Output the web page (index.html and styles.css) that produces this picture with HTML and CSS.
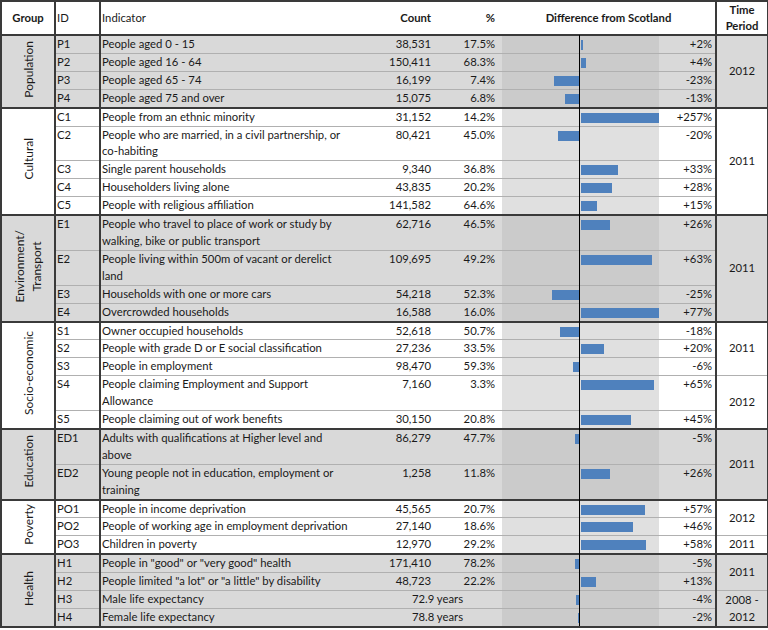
FILE: index.html
```html
<!DOCTYPE html>
<html>
<head>
<meta charset="utf-8">
<link rel="stylesheet" href="styles.css">
</head>
<body>
<div class="wrap">
<table class="sheet">
<colgroup>
<col class="w-grp"><col class="w-id"><col class="w-ind"><col class="w-cnt"><col class="w-pct"><col class="w-chart"><col class="w-dv"><col class="w-tp">
</colgroup>
<thead>
<tr>
<th class="c-grp">Group</th>
<th class="c-id plain">ID</th>
<th class="c-ind plain">Indicator</th>
<th class="num">Count</th>
<th class="pct">%</th>
<th class="diffh" colspan="2">Difference from Scotland</th>
<th class="c-tp">Time<br>Period</th>
</tr>
</thead>

<tbody class="grey">
<tr><td class="c-grp gl" rowspan="4"><div class="vt">Population</div></td><td class="c-id">P1</td><td class="c-ind">People aged 0 - 15</td><td class="num">38,531</td><td class="pct">17.5%</td><td class="chart"><div class="track"><div class="neg"></div><div class="pos"><span class="bar" style="width:2px"></span></div></div></td><td class="dv">+2%</td><td class="c-tp" rowspan="4">2012</td></tr>
<tr><td class="c-id">P2</td><td class="c-ind">People aged 16 - 64</td><td class="num">150,411</td><td class="pct">68.3%</td><td class="chart"><div class="track"><div class="neg"></div><div class="pos"><span class="bar" style="width:5px"></span></div></div></td><td class="dv">+4%</td></tr>
<tr><td class="c-id">P3</td><td class="c-ind">People aged 65 - 74</td><td class="num">16,199</td><td class="pct">7.4%</td><td class="chart"><div class="track"><div class="neg"><span class="bar" style="width:26px"></span></div><div class="pos"></div></div></td><td class="dv">-23%</td></tr>
<tr><td class="c-id">P4</td><td class="c-ind">People aged 75 and over</td><td class="num">15,075</td><td class="pct">6.8%</td><td class="chart"><div class="track"><div class="neg"><span class="bar" style="width:15px"></span></div><div class="pos"></div></div></td><td class="dv">-13%</td></tr>
</tbody>

<tbody class="white">
<tr><td class="c-grp gl" rowspan="5"><div class="vt">Cultural</div></td><td class="c-id">C1</td><td class="c-ind">People from an ethnic minority</td><td class="num">31,152</td><td class="pct">14.2%</td><td class="chart"><div class="track"><div class="neg"></div><div class="pos"><span class="bar" style="width:79px"></span></div></div></td><td class="dv">+257%</td><td class="c-tp" rowspan="5">2011</td></tr>
<tr><td class="c-id">C2</td><td class="c-ind">People who are married, in a civil partnership, or<br>co-habiting</td><td class="num">80,421</td><td class="pct">45.0%</td><td class="chart"><div class="track"><div class="neg"><span class="bar" style="width:22px"></span></div><div class="pos"></div></div></td><td class="dv">-20%</td></tr>
<tr><td class="c-id">C3</td><td class="c-ind">Single parent households</td><td class="num">9,340</td><td class="pct">36.8%</td><td class="chart"><div class="track"><div class="neg"></div><div class="pos"><span class="bar" style="width:37px"></span></div></div></td><td class="dv">+33%</td></tr>
<tr><td class="c-id">C4</td><td class="c-ind">Householders living alone</td><td class="num">43,835</td><td class="pct">20.2%</td><td class="chart"><div class="track"><div class="neg"></div><div class="pos"><span class="bar" style="width:31px"></span></div></div></td><td class="dv">+28%</td></tr>
<tr><td class="c-id">C5</td><td class="c-ind">People with religious affiliation</td><td class="num">141,582</td><td class="pct">64.6%</td><td class="chart"><div class="track"><div class="neg"></div><div class="pos"><span class="bar" style="width:16px"></span></div></div></td><td class="dv">+15%</td></tr>
</tbody>

<tbody class="grey">
<tr><td class="c-grp gl" rowspan="4"><div class="vt">Environment/<br>Transport</div></td><td class="c-id">E1</td><td class="c-ind">People who travel to place of work or study by<br>walking, bike or public transport</td><td class="num">62,716</td><td class="pct">46.5%</td><td class="chart"><div class="track"><div class="neg"></div><div class="pos"><span class="bar" style="width:29px"></span></div></div></td><td class="dv">+26%</td><td class="c-tp" rowspan="4">2011</td></tr>
<tr><td class="c-id">E2</td><td class="c-ind">People living within 500m of vacant or derelict<br>land</td><td class="num">109,695</td><td class="pct">49.2%</td><td class="chart"><div class="track"><div class="neg"></div><div class="pos"><span class="bar" style="width:71px"></span></div></div></td><td class="dv">+63%</td></tr>
<tr><td class="c-id">E3</td><td class="c-ind">Households with one or more cars</td><td class="num">54,218</td><td class="pct">52.3%</td><td class="chart"><div class="track"><div class="neg"><span class="bar" style="width:28px"></span></div><div class="pos"></div></div></td><td class="dv">-25%</td></tr>
<tr><td class="c-id">E4</td><td class="c-ind">Overcrowded households</td><td class="num">16,588</td><td class="pct">16.0%</td><td class="chart"><div class="track"><div class="neg"></div><div class="pos"><span class="bar" style="width:79px"></span></div></div></td><td class="dv">+77%</td></tr>
</tbody>

<tbody class="white">
<tr><td class="c-grp gl" rowspan="5"><div class="vt">Socio-economic</div></td><td class="c-id">S1</td><td class="c-ind">Owner occupied households</td><td class="num">52,618</td><td class="pct">50.7%</td><td class="chart"><div class="track"><div class="neg"><span class="bar" style="width:20px"></span></div><div class="pos"></div></div></td><td class="dv">-18%</td><td class="c-tp" rowspan="3">2011</td></tr>
<tr><td class="c-id">S2</td><td class="c-ind">People with grade D or E social classification</td><td class="num">27,236</td><td class="pct">33.5%</td><td class="chart"><div class="track"><div class="neg"></div><div class="pos"><span class="bar" style="width:23px"></span></div></div></td><td class="dv">+20%</td></tr>
<tr><td class="c-id">S3</td><td class="c-ind">People in employment</td><td class="num">98,470</td><td class="pct">59.3%</td><td class="chart"><div class="track"><div class="neg"><span class="bar" style="width:7px"></span></div><div class="pos"></div></div></td><td class="dv">-6%</td></tr>
<tr><td class="c-id">S4</td><td class="c-ind">People claiming Employment and Support<br>Allowance</td><td class="num">7,160</td><td class="pct">3.3%</td><td class="chart"><div class="track"><div class="neg"></div><div class="pos"><span class="bar" style="width:73px"></span></div></div></td><td class="dv">+65%</td><td class="c-tp" rowspan="2">2012</td></tr>
<tr><td class="c-id">S5</td><td class="c-ind">People claiming out of work benefits</td><td class="num">30,150</td><td class="pct">20.8%</td><td class="chart"><div class="track"><div class="neg"></div><div class="pos"><span class="bar" style="width:50px"></span></div></div></td><td class="dv">+45%</td></tr>
</tbody>

<tbody class="grey">
<tr><td class="c-grp gl" rowspan="2"><div class="vt">Education</div></td><td class="c-id">ED1</td><td class="c-ind">Adults with qualifications at Higher level and<br>above</td><td class="num">86,279</td><td class="pct">47.7%</td><td class="chart"><div class="track"><div class="neg"><span class="bar" style="width:5px"></span></div><div class="pos"></div></div></td><td class="dv">-5%</td><td class="c-tp" rowspan="2">2011</td></tr>
<tr><td class="c-id">ED2</td><td class="c-ind">Young people not in education, employment or<br>training</td><td class="num">1,258</td><td class="pct">11.8%</td><td class="chart"><div class="track"><div class="neg"></div><div class="pos"><span class="bar" style="width:29px"></span></div></div></td><td class="dv">+26%</td></tr>
</tbody>

<tbody class="white">
<tr><td class="c-grp gl" rowspan="3"><div class="vt">Poverty</div></td><td class="c-id">PO1</td><td class="c-ind">People in income deprivation</td><td class="num">45,565</td><td class="pct">20.7%</td><td class="chart"><div class="track"><div class="neg"></div><div class="pos"><span class="bar" style="width:64px"></span></div></div></td><td class="dv">+57%</td><td class="c-tp" rowspan="2">2012</td></tr>
<tr><td class="c-id">PO2</td><td class="c-ind">People of working age in employment deprivation</td><td class="num">27,140</td><td class="pct">18.6%</td><td class="chart"><div class="track"><div class="neg"></div><div class="pos"><span class="bar" style="width:52px"></span></div></div></td><td class="dv">+46%</td></tr>
<tr><td class="c-id">PO3</td><td class="c-ind">Children in poverty</td><td class="num">12,970</td><td class="pct">29.2%</td><td class="chart"><div class="track"><div class="neg"></div><div class="pos"><span class="bar" style="width:65px"></span></div></div></td><td class="dv">+58%</td><td class="c-tp">2011</td></tr>
</tbody>

<tbody class="grey">
<tr><td class="c-grp gl" rowspan="4"><div class="vt">Health</div></td><td class="c-id">H1</td><td class="c-ind">People in "good" or "very good" health</td><td class="num">171,410</td><td class="pct">78.2%</td><td class="chart"><div class="track"><div class="neg"><span class="bar" style="width:5px"></span></div><div class="pos"></div></div></td><td class="dv">-5%</td><td class="c-tp" rowspan="2">2011</td></tr>
<tr><td class="c-id">H2</td><td class="c-ind">People limited "a lot" or "a little" by disability</td><td class="num">48,723</td><td class="pct">22.2%</td><td class="chart"><div class="track"><div class="neg"></div><div class="pos"><span class="bar" style="width:15px"></span></div></div></td><td class="dv">+13%</td></tr>
<tr><td class="c-id">H3</td><td class="c-ind">Male life expectancy</td><td class="yrs" colspan="2">72.9 years</td><td class="chart"><div class="track"><div class="neg"><span class="bar" style="width:4px"></span></div><div class="pos"></div></div></td><td class="dv">-4%</td><td class="c-tp" rowspan="2">2008 -<br>2012</td></tr>
<tr><td class="c-id">H4</td><td class="c-ind">Female life expectancy</td><td class="yrs" colspan="2">78.8 years</td><td class="chart"><div class="track"><div class="neg"><span class="bar" style="width:2px"></span></div><div class="pos"></div></div></td><td class="dv">-2%</td></tr>
</tbody>
</table>
<div class="axis"></div>
</div>
</body>
</html>
```
FILE: styles.css
```css
html, body {
  margin: 0;
  padding: 0;
  background: #ffffff;
}
body {
  font-family: Lato, "Liberation Sans", sans-serif;
  font-size: 11.3px;
  color: #1a1a1a;
}
.wrap {
  position: relative;
  width: 767px;
}
.sheet {
  border-collapse: collapse;
  table-layout: fixed;
  width: 767px;
  border: 2px solid #3a3a3a;
}
.w-grp { width: 54px; }
.w-id { width: 45px; }
.w-ind { width: 273px; }
.w-cnt { width: 64px; }
.w-pct { width: 65px; }
.w-chart { width: 157px; }
.w-dv { width: 57px; }
.w-tp { width: 52px; }

th, td {
  padding: 0 2px;
  line-height: 16.9px;
  white-space: nowrap;
  vertical-align: top;
  text-align: left;
  border-top: 1px solid #b0b0b0;
}
th {
  height: 32px;
  vertical-align: middle;
  font-weight: bold;
  border-bottom: 2px solid #3a3a3a;
  background: #ffffff;
}
th.plain { font-weight: normal; }
th.c-grp { text-align: center; }
th.c-tp { text-align: center; line-height: 16px; }
th.diffh { text-align: center; }
tbody { border-top: 2px solid #3a3a3a; }

.c-id, .c-ind { padding-left: 1px; }
.c-grp, .c-id { border-right: 2px solid #3a3a3a; }
.c-tp { border-left: 2px solid #3a3a3a; text-align: center; vertical-align: middle; }
.num { text-align: right; padding-right: 6px; }
.pct { text-align: right; padding-right: 7px; }
.dv { text-align: right; padding-right: 3px; }
.yrs { text-align: center; }
.gl { text-align: center; vertical-align: middle; padding: 0; }
.vt {
  display: inline-block;
  writing-mode: vertical-rl;
  transform: rotate(180deg);
  font-size: 12px;
  line-height: 17px;
  text-align: center;
}

.grey td { background: #d9d9d9; }
.white td { background: #ffffff; }
.grey td.chart { background: #cbcbcb; }
.white td.chart { background: #e0e0e0; }

td.chart { padding: 4px 0 0 0; }
.track { display: flex; height: 10px; }
.neg { width: 78px; display: flex; justify-content: flex-end; }
.pos { width: 78px; margin-left: 1px; display: flex; }
.bar { display: block; height: 10px; background: #4f81bd; }

.axis {
  position: absolute;
  left: 579px;
  top: 35px;
  bottom: 2px;
  width: 1px;
  background: #000000;
}
```
